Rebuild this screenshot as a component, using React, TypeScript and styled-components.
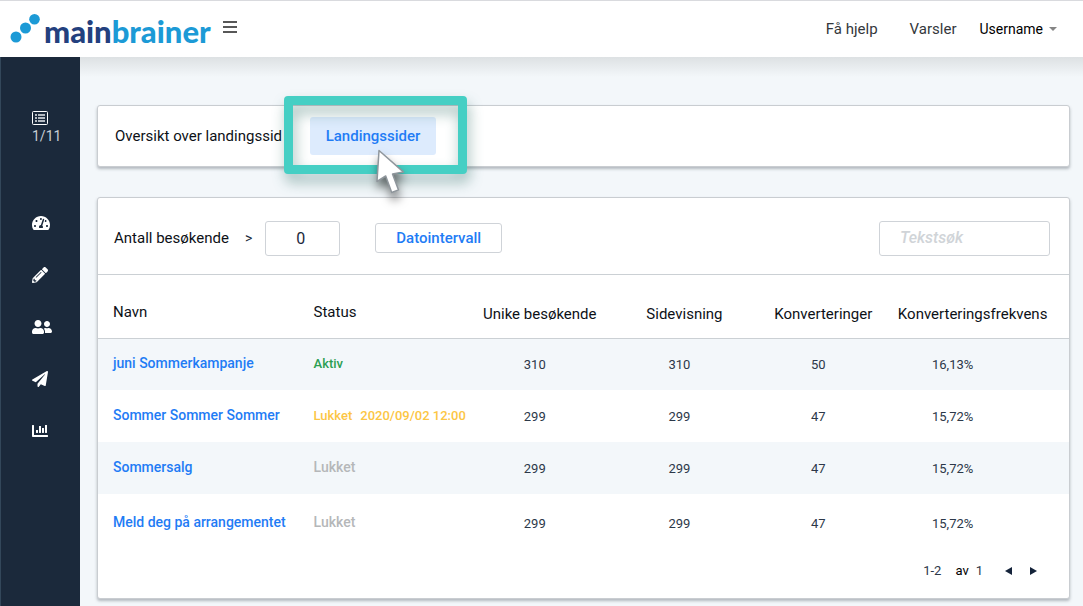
import React from "react";
import styled, { createGlobalStyle } from "styled-components";
import {
  FaChartBar,
  FaPaperPlane,
  FaPencilAlt,
  FaTachometerAlt,
  FaUserFriends,
} from "react-icons/fa";

const GlobalStyle = createGlobalStyle`
  *, *::before, *::after { box-sizing: border-box; }
  body {
    margin: 0;
    background: #f3f7fa;
    color: #0d1117;
    font: 400 15px/20px Roboto, "Liberation Sans", sans-serif;
  }
  button, input { font: inherit; color: inherit; }
  button { cursor: pointer; }
  a { text-decoration: none; }
`;

const Page = styled.div`
  min-height: 100vh;
  display: flex;
  flex-direction: column;
`;

const TopBar = styled.header`
  display: flex;
  align-items: center;
  height: 57px;
  padding: 0 26px 0 10px;
  background: #fff;
  border-top: 1px solid #d9dade;
`;

const Logo = styled.a`
  display: flex;
  align-items: flex-start;
  gap: 3px;
  height: 30px;
  color: #23407e;
  font: 900 31px/34px Lato, sans-serif;
`;

const LogoAccent = styled.span`
  color: #1c9ad6;
`;

const PlainButton = styled.button`
  display: flex;
  align-items: center;
  padding: 0;
  border: 0;
  background: none;
`;

const MenuButton = styled(PlainButton)`
  margin: 0 auto 4px 12px;
`;

const TopNav = styled.nav`
  display: flex;
  align-items: center;
  gap: 32px;
`;

const TopLink = styled.a`
  color: #34383c;
`;

const UserButton = styled(PlainButton)`
  gap: 6px;
  margin-left: -9px;
  color: #000;
  font-size: 14px;
`;

const Body = styled.div`
  flex: 1;
  display: flex;
`;

const Sidebar = styled.nav`
  flex: none;
  width: 80px;
  padding: 53px 0 0 31px;
  background: #1b293b;
  border-left: 1px solid #33475a;
  color: #fff;
  display: flex;
  flex-direction: column;
  align-items: flex-start;
`;

const Progress = styled.a`
  display: flex;
  flex-direction: column;
  gap: 2px;
  height: 87px;
  color: #c8ced5;
  font-size: 14px;
  line-height: 18px;
`;

const SideLink = styled.a`
  display: flex;
  align-items: center;
  height: 52px;
  color: inherit;
`;

const Main = styled.main`
  flex: 1;
  min-width: 0;
  padding: 48px 13px 7px 17px;
  background: linear-gradient(#dde1e3, #f3f7fa 20px);
`;

const Card = styled.section`
  background: #fff;
  border: 1px solid #c9cdd1;
  border-radius: 3px;
  box-shadow: 0 2px 3px rgba(60, 70, 80, 0.35);
`;

const TabCard = styled(Card)`
  display: flex;
  align-items: center;
  height: 62px;
  padding-left: 17px;
  margin-bottom: 30px;
`;

const TabTitle = styled.span`
  width: 195px;
  white-space: nowrap;
`;

const TabSpot = styled.div`
  position: relative;
`;

const Tab = styled.button`
  width: 126px;
  height: 38px;
  padding: 0;
  border: 0;
  border-radius: 3px;
  background: #ddebfd;
  color: #1f7cf5;
  font-weight: 500;
`;

const Highlight = styled.div`
  position: absolute;
  inset: -21px -31px -19px -26px;
  border: 9px solid #45cfc4;
  border-radius: 4px;
  filter: drop-shadow(2px 8px 7px rgba(20, 90, 80, 0.4));
  pointer-events: none;
`;

const Pointer = styled.svg`
  position: absolute;
  left: 64px;
  top: 31px;
  filter: drop-shadow(1px 7px 5px rgba(0, 0, 0, 0.5));
  pointer-events: none;
`;

const Filters = styled.form`
  display: flex;
  align-items: center;
  height: 77px;
  padding: 4px 19px 0 16px;
  border-bottom: 1px solid #cbd0d4;
`;

const CountLabel = styled.label`
  display: flex;
  align-items: center;
  gap: 16px;
`;

const Compare = styled.span`
  color: #1b293b;
  font-size: 14px;
`;

const Field = styled.input`
  height: 35px;
  border: 1px solid #cfd3d8;
  border-radius: 3px;
  background: #fff;
  outline: 0;
`;

const CountField = styled(Field)`
  width: 75px;
  margin: 0 35px 0 13px;
  padding: 0 4px 0 0;
  text-align: center;
  color: #1b293b;
  font-size: 16px;
`;

const SearchField = styled(Field)`
  width: 171px;
  margin-left: auto;
  padding: 0 20px;
  &::placeholder {
    color: #d0d4d8;
    opacity: 1;
    font-size: 16px;
    font-style: italic;
    font-weight: 500;
  }
`;

const DateButton = styled.button`
  width: 127px;
  height: 30px;
  padding: 0;
  border: 1px solid #cfd3d8;
  border-radius: 3px;
  background: #fff;
  color: #1f7cf5;
  font-weight: 500;
`;

const Table = styled.table`
  width: 100%;
  table-layout: fixed;
  border-collapse: collapse;
`;

const Heading = styled.th<{ $width: string; $center?: boolean }>`
  width: ${(p) => p.$width};
  height: 63px;
  padding: ${(p) => (p.$center ? "16px 0 0" : "12px 0 0")};
  text-align: ${(p) => (p.$center ? "center" : "left")};
  font-weight: 400;
  white-space: nowrap;
  border-bottom: 1px solid #cbd0d4;
  &:first-child { padding-left: 15px; }
  &:last-child { padding-right: 15px; }
`;

const Row = styled.tr`
  height: 52px;
  &:nth-child(odd) { background: #f3f7fa; }
  &:last-child { height: 57px; }
`;

const Cell = styled.td`
  padding: 0 0 2px;
  white-space: nowrap;
  font-size: 14px;
  &:first-child { padding-left: 15px; }
`;

const NumberCell = styled(Cell)`
  padding: 2px 10px 0 0;
  text-align: center;
  color: #2c3849;
  font-size: 13px;
  &:last-child { padding-right: 55px; }
`;

const NameLink = styled.a`
  color: #1f7cf5;
  font-weight: 500;
`;

const tones = { active: "#2b9f52", warning: "#fcc644", muted: "#b5b7b9" };

const Status = styled.span<{ $tone: keyof typeof tones }>`
  color: ${(p) => tones[p.$tone]};
  font-weight: 500;
  font-size: ${(p) => (p.$tone === "muted" ? "14px" : "13px")};
`;

const ClosedAt = styled.time`
  margin-left: 8px;
`;

const Pager = styled.footer`
  display: flex;
  align-items: center;
  justify-content: flex-end;
  height: 47px;
  padding: 0 31px 8px 0;
  gap: 14px;
  font-size: 13px;
  color: #2c3849;
`;

const PageCount = styled.span`
  margin-right: 7px;
  & > b { margin-right: 7px; font-weight: 400; color: #000; }
`;

const sideLinks = [
  { label: "Dashbord", Icon: FaTachometerAlt, size: 18 },
  { label: "Rediger", Icon: FaPencilAlt, size: 16 },
  { label: "Kontakter", Icon: FaUserFriends, size: 20 },
  { label: "Send", Icon: FaPaperPlane, size: 16 },
  { label: "Rapporter", Icon: FaChartBar, size: 16 },
];

const columns = [
  { title: "Unike besøkende", width: "15.2%" },
  { title: "Sidevisning", width: "14.6%" },
  { title: "Konverteringer", width: "14%" },
  { title: "Konverteringsfrekvens", width: "18.3%" },
];

type PageRow = {
  name: string;
  status: string;
  tone: keyof typeof tones;
  date?: string;
  values: string[];
};

const rows: PageRow[] = [
  { name: "juni Sommerkampanje", status: "Aktiv", tone: "active", values: ["310", "310", "50", "16,13%"] },
  { name: "Sommer Sommer Sommer", status: "Lukket", tone: "warning", date: "2020/09/02 12:00", values: ["299", "299", "47", "15,72%"] },
  { name: "Sommersalg", status: "Lukket", tone: "muted", values: ["299", "299", "47", "15,72%"] },
  { name: "Meld deg på arrangementet", status: "Lukket", tone: "muted", values: ["299", "299", "47", "15,72%"] },
];

export default function App() {
  return (
    <Page>
      <GlobalStyle />
      <TopBar>
        <Logo href="#">
          <svg width="31" height="30" viewBox="0 0 31 30" fill="#1c9ad6" aria-hidden="true">
            <circle cx="6" cy="23" r="5.5" />
            <circle cx="15.5" cy="14" r="5.5" />
            <circle cx="24.5" cy="5.3" r="5.3" />
          </svg>
          <span>main<LogoAccent>brainer</LogoAccent></span>
        </Logo>
        <MenuButton aria-label="Meny">
          <svg width="14" height="12" viewBox="0 0 14 12" stroke="#222" strokeWidth="1.3" aria-hidden="true">
            <path d="M0 1h14M0 6h14M0 11h14" />
          </svg>
        </MenuButton>
        <TopNav>
          <TopLink href="#">Få hjelp</TopLink>
          <TopLink href="#">Varsler</TopLink>
          <UserButton>
            Username
            <svg width="8" height="4" viewBox="0 0 8 4" fill="#858585" aria-hidden="true">
              <path d="M0 0h8L4 4z" />
            </svg>
          </UserButton>
        </TopNav>
      </TopBar>
      <Body>
        <Sidebar>
          <Progress href="#">
            <svg width="16" height="15" viewBox="0 0 16 15" aria-hidden="true">
              <rect x="0.5" y="1.5" width="15" height="13" rx="1" fill="none" stroke="#fff" />
              <path
                d="M3 5h2M3 8h2M3 11h2M6 5h7M6 8h7M6 11h7"
                stroke="#b4bac1"
                strokeWidth="1.8"
              />
            </svg>
            1/11
          </Progress>
          {sideLinks.map(({ label, Icon, size }) => (
            <SideLink key={label} href="#" aria-label={label}>
              <Icon size={size} />
            </SideLink>
          ))}
        </Sidebar>
        <Main>
          <TabCard>
            <TabTitle>Oversikt over landingssid</TabTitle>
            <TabSpot>
              <Tab>Landingssider</Tab>
              <Highlight />
              <Pointer width="32" height="46" viewBox="0 0 32 46" aria-hidden="true">
                <path
                  d="M5 2.5 3 33.5l8.7-5.5 6 16.5 6.8-2.6-6-15.8 10.8-2.2z"
                  fill="#fff"
                  stroke="#8f969c"
                  strokeWidth="1.5"
                  strokeLinejoin="round"
                />
              </Pointer>
            </TabSpot>
          </TabCard>
          <Card>
            <Filters onSubmit={(e) => e.preventDefault()}>
              <CountLabel htmlFor="visitors">
                Antall besøkende <Compare>&gt;</Compare>
              </CountLabel>
              <CountField id="visitors" defaultValue="0" />
              <DateButton type="button">Datointervall</DateButton>
              <SearchField aria-label="Tekstsøk" placeholder="Tekstsøk" />
            </Filters>
            <Table>
              <thead>
                <tr>
                  <Heading $width="22.2%">Navn</Heading>
                  <Heading $width="15.7%">Status</Heading>
                  {columns.map((c) => (
                    <Heading key={c.title} $width={c.width} $center>{c.title}</Heading>
                  ))}
                </tr>
              </thead>
              <tbody>
                {rows.map((row) => (
                  <Row key={row.name}>
                    <Cell><NameLink href="#">{row.name}</NameLink></Cell>
                    <Cell>
                      <Status $tone={row.tone}>
                        {row.status}
                        {row.date && <ClosedAt>{row.date}</ClosedAt>}
                      </Status>
                    </Cell>
                    {row.values.map((value, i) => (
                      <NumberCell key={i}>{value}</NumberCell>
                    ))}
                  </Row>
                ))}
              </tbody>
            </Table>
            <Pager>
              <span>1-2</span>
              <PageCount><b>av</b>1</PageCount>
              <PlainButton aria-label="Forrige side">
                <svg width="10" height="8" viewBox="0 0 10 8" fill="#14233a" aria-hidden="true"><path d="M8 0v8L1 4z" /></svg>
              </PlainButton>
              <PlainButton aria-label="Neste side">
                <svg width="10" height="8" viewBox="0 0 10 8" fill="#14233a" aria-hidden="true"><path d="M2 0v8l7-4z" /></svg>
              </PlainButton>
            </Pager>
          </Card>
        </Main>
      </Body>
    </Page>
  );
}
